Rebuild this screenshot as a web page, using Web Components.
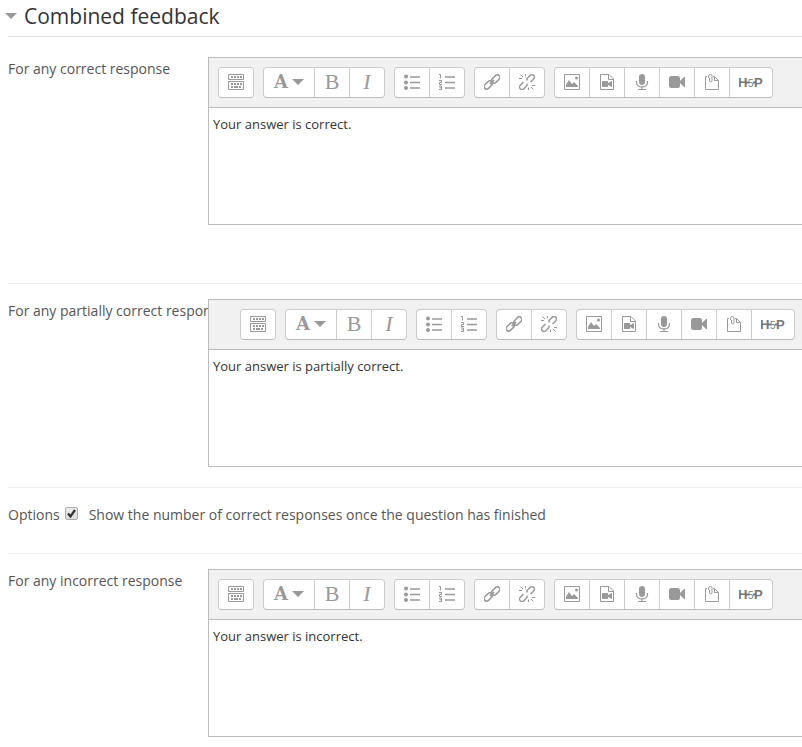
<!DOCTYPE html>
<html lang="en">
<head>
<meta charset="utf-8">
<meta name="viewport" content="width=device-width, initial-scale=1">
<title>Combined feedback</title>
<style>
  body { margin: 0; background: #fff; color: #555; font: 14px/20px "Open Sans", sans-serif; overflow-x: hidden; }
</style>
</head>
<body>
<form-section heading="Combined feedback">
  <feedback-editor label="For any correct response" value="Your answer is correct." style="--gap-after: 58px"></feedback-editor>
  <feedback-editor label="For any partially correct response" value="Your answer is partially correct." style="--toolbar-inset: 31px"></feedback-editor>
  <option-row label="Options" text="Show the number of correct responses once the question has finished"></option-row>
  <feedback-editor label="For any incorrect response" value="Your answer is incorrect."></feedback-editor>
</form-section>

<script>
const ICONS = {
  toggle: `<path d="M.5 .5h15v5H.5zM.5 7.500h15v8H.5z" fill="none" stroke="#999"/><path d="M3 3h11M3 10h11" stroke="#999" stroke-width="2" stroke-dasharray="2 1"/><path d="M3 13h2m1 0h4m1 0h2" stroke="#999" stroke-width="2"/>`,
  ul: `<g fill="#999"><circle cx="2" cy="2.500" r="2"/><circle cx="2" cy="8.500" r="2"/><circle cx="2" cy="14" r="2"/></g><path d="M6 3h10M6 8.500h10M6 14h10" stroke="#999" stroke-width="1.300"/>`,
  ol: `<path d="M6 3h10M6 8.500h10M6 14h10" stroke="#999" stroke-width="1.300"/><path d="M0 .5h1.500v4M0 6.500h2.500v2h-2v2H3M0 12h2.500v3.500H0M.5 13.700h2" fill="none" stroke="#999"/>`,
  link: `<g fill="none" stroke="#999" stroke-width="1.500" transform="rotate(-45 8 8)"><rect x="-1.500" y="5" width="9.500" height="5" rx="2.500"/><rect x="8" y="6" width="9.500" height="5" rx="2.500"/><path d="M5 8h6" stroke-width="1.800"/></g>`,
  unlink: `<g fill="none" stroke="#999" stroke-width="1.500"><g transform="rotate(-45 8 8)"><path d="M5.500 5.500H1a2.500 2.500 0 0 0 0 5h4.500L7 9M10.500 10.500H15a2.500 2.500 0 0 0 0-5h-4.500L9 7"/></g><path d="M0 4.500h3M6.500 0v2.500M1.500 .5l2.500 2.500M16 11.500h-3M9.500 16v-2.500M14.500 15.500L12 13" stroke-width="1"/></g>`,
  image: `<path d="M.5 .5h15v15H.5z" fill="none" stroke="#999"/><path d="M2 13v-2l3-5 3 4 2-2 4 4v1z" fill="#999"/><circle cx="12.500" cy="4" r="1.500" fill="#999"/>`,
  media: `<path d="M1.500 .5H10l4.500 4.500v10.500h-13zM9.500 .5V5.500h5" fill="none" stroke="#999"/><path d="M3 7h6v2l4-2v6l-4-2v2H3z" fill="#999"/>`,
  mic: `<rect x="5" y="0" width="6" height="11" rx="3" fill="#999"/><path d="M2.500 7v1.500a5.500 4.500 0 0 0 11 0V7M8 12v3M4 15.500h8" fill="none" stroke="#999" stroke-width="1.200"/>`,
  video: `<rect x="0" y="2" width="11" height="12" rx="2.500" fill="#999"/><path d="M11 7l4-4h1v10h-1l-4-4z" fill="#999"/>`,
  files: `<path d="M3 2.500H1.500v13h13V6.500l-4-4H9M10.500 2.500v4h4" fill="none" stroke="#999"/><path d="M4.500 4V2.200a1.700 1.700 0 0 1 3.500 0V7a1.300 1.300 0 0 1-2.500 0V4" fill="none" stroke="#999"/>`
};
const svg = name => `<svg width="16" height="16" viewBox="0 0 16 16" aria-hidden="true">${ICONS[name]}</svg>`;

class FormSection extends HTMLElement {
  constructor() {
    super();
    this.attachShadow({ mode: 'open' }).innerHTML = `
      <style>
        :host { display: block; padding-left: 8px; }
        h2 { margin: 0 0 20px; border-bottom: 1px solid #ddd; }
        button { display: flex; align-items: center; gap: 7px; height: 36px; margin-left: -3px; padding: 0 0 4px; border: 0;
          background: none; color: #333; font: 21px/32px "Open Sans", sans-serif; }
      </style>
      <h2><button type="button" aria-expanded="true"><svg width="12" height="6" viewBox="0 0 12 6" aria-hidden="true"><path d="M0 0h12L6 6z" fill="#999"/></svg><span></span></button></h2>
      <slot></slot>`;
    this.shadowRoot.querySelector('span').textContent = this.getAttribute('heading');
  }
}

class ToolButton extends HTMLElement {
  constructor() {
    super();
    const icon = this.getAttribute('icon');
    this.attachShadow({ mode: 'open' }).innerHTML = `
      <style>
        :host { display: flex; flex: none; width: 34px; }
        :host([wide]) { width: 50px; }
        :host([logo]) { width: 42px; }
        button { display: flex; flex: 1; align-items: center; justify-content: center; gap: 4px; height: 29px; padding: 0 0 1px; border: 0;
          background: #fff; color: #999; font: 22px/28px "Liberation Serif", serif; border-radius: inherit; }
        ::slotted(b) { font: bold 18px/28px "DejaVu Serif", serif; }
        svg { flex: none; }
      </style>
      <button type="button">${icon ? svg(icon) : '<slot></slot>'}</button>`;
    this.shadowRoot.querySelector('button').setAttribute('aria-label', this.getAttribute('name'));
  }
}

class ToolGroup extends HTMLElement {
  constructor() {
    super();
    this.attachShadow({ mode: 'open' }).innerHTML = `
      <style>
        :host { display: flex; flex: none; gap: 1px; border: 1px solid #ccc; border-bottom-color: #bbb; border-radius: 4px; background: #ccc; overflow: hidden; }
      </style><slot></slot>`;
  }
}

class EditorToolbar extends HTMLElement {
  constructor() {
    super();
    const b = (icon, name) => `<tool-button icon="${icon}" name="${name}"></tool-button>`;
    this.attachShadow({ mode: 'open' }).innerHTML = `
      <style>
        :host { display: flex; gap: 9px; padding: 9px 0 9px var(--toolbar-inset, 9px); background: #f1f1f1; border-bottom: 1px solid #bbb; overflow: hidden; }
      </style>
      <tool-group>${b('toggle', 'Show more buttons')}</tool-group>
      <tool-group>
        <tool-button wide name="Paragraph styles"><b>A</b><svg width="12" height="6" viewBox="0 0 12 6"><path d="M0 0h12L6 6z" fill="#999"/></svg></tool-button>
        <tool-button name="Bold"><span>B</span></tool-button>
        <tool-button name="Italic"><i>I</i></tool-button>
      </tool-group>
      <tool-group>${b('ul', 'Unordered list')}${b('ol', 'Ordered list')}</tool-group>
      <tool-group>${b('link', 'Link')}${b('unlink', 'Unlink')}</tool-group>
      <tool-group>${b('image', 'Insert image')}${b('media', 'Insert media')}${b('mic', 'Record audio')}${b('video', 'Record video')}${b('files', 'Manage files')}
        <tool-button logo name="Insert H5P"><svg width="24" height="16" viewBox="0 0 24 16" fill="#777" font-family="Liberation Sans, sans-serif" font-weight="bold"><text y="13" font-size="13"><tspan x="-1">H</tspan><tspan x="9" font-size="10" font-weight="normal">5</tspan><tspan x="15">P</tspan></text><path d="M7 8.500h3M14 8.500h3" stroke="#777" stroke-width="2"/></svg></tool-button>
      </tool-group>`;
  }
}

class FeedbackEditor extends HTMLElement {
  constructor() {
    super();
    this.attachShadow({ mode: 'open' }).innerHTML = `
      <style>
        :host { display: grid; grid-template-columns: 200px minmax(0, 1fr); padding-bottom: var(--gap-after, 20px); }
        :host(:not(:first-of-type)) { padding-top: 15px; border-top: 1px solid #eee; }
        label { padding-top: 2px; white-space: nowrap; overflow: hidden; }
        .editor { border: 1px solid #bbb; border-right: 0; background: #fff; }
        textarea { display: block; box-sizing: border-box; width: 100%; height: 116px; padding: 6px 4px; border: 0; resize: none; outline: 0;
          background: #fff; color: #333; font: 13px/20px "Open Sans", sans-serif; }
      </style>
      <label for="text"></label>
      <div class="editor"><editor-toolbar></editor-toolbar><textarea id="text"></textarea></div>`;
    this.shadowRoot.querySelector('label').textContent = this.getAttribute('label');
    this.shadowRoot.querySelector('textarea').value = this.getAttribute('value');
  }
}

class OptionRow extends HTMLElement {
  constructor() {
    super();
    this.attachShadow({ mode: 'open' }).innerHTML = `
      <style>
        :host { display: flex; padding: 17px 0 28px; border-top: 1px solid #eee; }
        .box { display: grid; width: 13px; height: 13px; margin: 2px 11px 0 5px; }
        input, svg { grid-area: 1 / 1; }
        input { appearance: none; box-sizing: border-box; width: 13px; height: 13px; margin: 0; border: 1px solid #aaa; border-radius: 2px;
          background: linear-gradient(#eee, #ddd); }
        svg { pointer-events: none; visibility: hidden; }
        input:checked + svg { visibility: visible; }
      </style>
      <span class="name"></span>
      <span class="box"><input id="option" type="checkbox" checked><svg width="13" height="13" viewBox="0 0 13 13"><path d="M3 6.500l2.500 3L10 3" fill="none" stroke="#333" stroke-width="2.200"/></svg></span>
      <label for="option"></label>`;
    this.shadowRoot.querySelector('.name').textContent = this.getAttribute('label');
    this.shadowRoot.querySelector('label').textContent = this.getAttribute('text');
  }
}

customElements.define('tool-button', ToolButton);
customElements.define('tool-group', ToolGroup);
customElements.define('editor-toolbar', EditorToolbar);
customElements.define('feedback-editor', FeedbackEditor);
customElements.define('option-row', OptionRow);
customElements.define('form-section', FormSection);
</script>
</body>
</html>
